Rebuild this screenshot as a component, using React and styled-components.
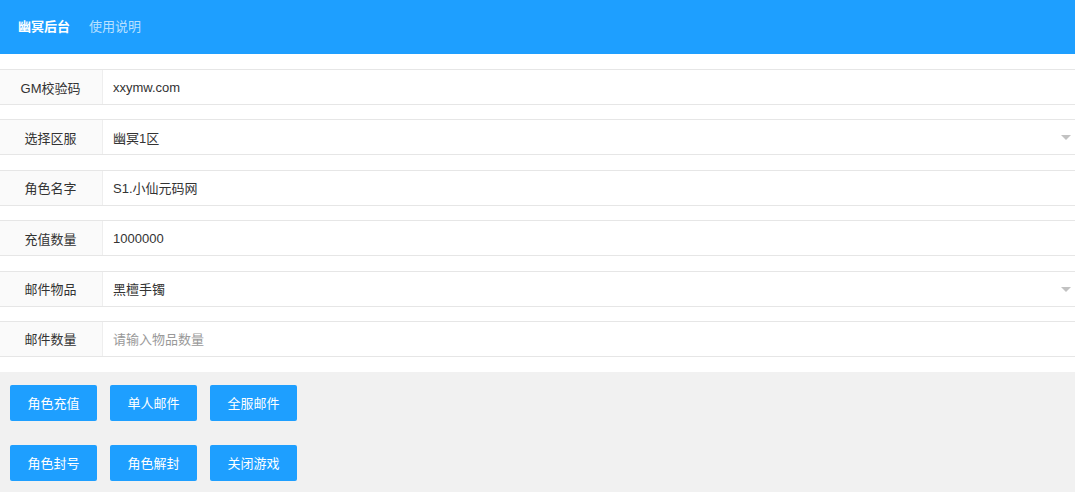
import React from 'react';
import styled, { createGlobalStyle } from 'styled-components';

const Global = createGlobalStyle`
  html, body { margin: 0; padding: 0; background: #fff; }
  body {
    font-family: "Liberation Sans", Arial, "Noto Sans CJK SC", sans-serif;
    color: #333;
    font-size: 13px;
  }
  * { box-sizing: border-box; }
`;

const Header = styled.div`
  height: 54px;
  background: #1e9fff;
  display: flex;
  align-items: center;
  padding: 0 0 4px 18px;
  gap: 19px;
`;

const NavItem = styled.span`
  font-size: 13px;
  color: ${p => (p.active ? '#fff' : 'rgba(255,255,255,0.7)')};
  font-weight: ${p => (p.active ? 'bold' : 'normal')};
`;

const Form = styled.div`
  padding-top: 15px;
  display: flex;
  flex-direction: column;
  gap: 14.4px;
  padding-bottom: 15px;
`;

const Row = styled.div`
  display: flex;
  height: 36px;
  border-top: 1px solid #e6e6e6;
  border-bottom: 1px solid #e6e6e6;
`;

const Label = styled.div`
  width: 103px;
  flex: none;
  background: #fafafa;
  border-right: 1px solid #eee;
  display: flex;
  align-items: center;
  justify-content: center;
  font-size: 13px;
  color: #333;
  padding-right: 1px;
`;

const Field = styled.div`
  flex: 1;
  position: relative;
  display: flex;
  align-items: center;
  padding-left: 10px;
  font-size: 13px;
  color: ${p => (p.placeholder ? '#999' : '#333')};
`;

const Arrow = styled.i`
  position: absolute;
  right: 4px;
  top: 50%;
  margin-top: -2px;
  width: 0;
  height: 0;
  border-left: 5px solid transparent;
  border-right: 5px solid transparent;
  border-top: 5px solid #c2c2c2;
`;

const Actions = styled.div`
  background: #f1f1f1;
  padding: 13px 10px 11px;
  display: flex;
  flex-direction: column;
  gap: 24px;
`;

const ButtonRow = styled.div`
  display: flex;
  gap: 13px;
`;

const Button = styled.button`
  width: 87px;
  height: 36px;
  border: none;
  border-radius: 2px;
  background: #1e9fff;
  color: #fff;
  font-family: inherit;
  font-size: 13px;
  padding: 0;
  cursor: pointer;
`;

const fields = [
  { label: 'GM校验码', value: 'xxymw.com' },
  { label: '选择区服', value: '幽冥1区', select: true },
  { label: '角色名字', value: 'S1.小仙元码网' },
  { label: '充值数量', value: '1000000' },
  { label: '邮件物品', value: '黑檀手镯', select: true },
  { label: '邮件数量', value: '请输入物品数量', placeholder: true },
];

const buttons = [
  ['角色充值', '单人邮件', '全服邮件'],
  ['角色封号', '角色解封', '关闭游戏'],
];

export default function App() {
  return (
    <>
      <Global />
      <Header>
        <NavItem active>幽冥后台</NavItem>
        <NavItem>使用说明</NavItem>
      </Header>
      <Form>
        {fields.map(f => (
          <Row key={f.label}>
            <Label>{f.label}</Label>
            <Field placeholder={f.placeholder}>
              {f.value}
              {f.select && <Arrow />}
            </Field>
          </Row>
        ))}
      </Form>
      <Actions>
        {buttons.map((row, i) => (
          <ButtonRow key={i}>
            {row.map(b => (
              <Button key={b}>{b}</Button>
            ))}
          </ButtonRow>
        ))}
      </Actions>
    </>
  );
}
